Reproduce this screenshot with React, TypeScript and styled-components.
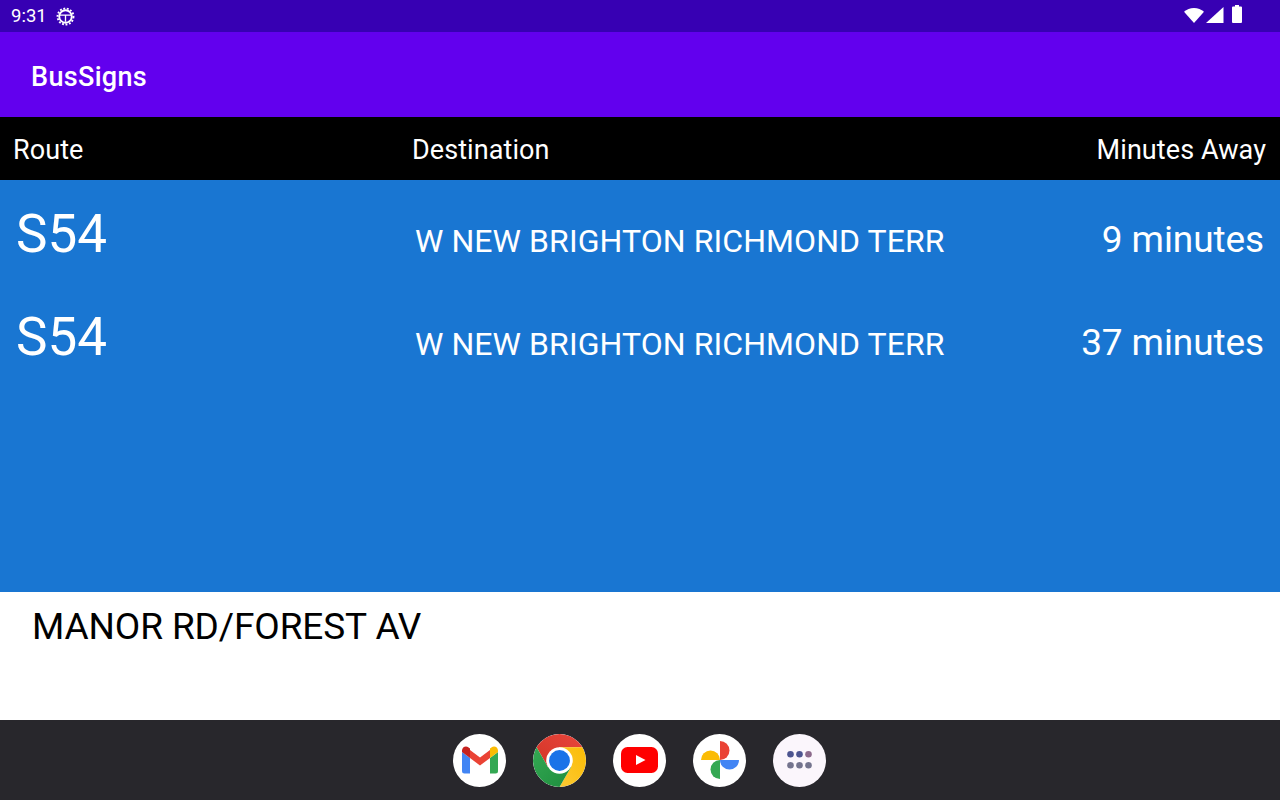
import React from 'react';
import styled, { createGlobalStyle } from 'styled-components';

const GlobalStyle = createGlobalStyle`
  html, body {
    margin: 0;
    padding: 0;
    background: #fff;
    font-family: Roboto, "Noto Sans", sans-serif;
  }
`;

const Screen = styled.div`
  width: 1280px;
  height: 800px;
  display: flex;
  flex-direction: column;
  overflow: hidden;
`;

const StatusBar = styled.div`
  height: 32px;
  flex: none;
  background: #3700b3;
  color: #fff;
  display: flex;
  align-items: center;
  justify-content: space-between;
  padding: 0 38px 0 11px;
  font-size: 18.5px;
`;

const ClockGroup = styled.div`
  display: flex;
  align-items: center;
  gap: 9px;
`;

const SystemIcons = styled.div`
  display: flex;
  align-items: flex-end;
  padding-bottom: 4px;

  svg:last-child {
    margin-left: 8px;
  }
  svg:first-child {
    margin-right: 2px;
  }
`;

const AppBar = styled.div`
  height: 85px;
  flex: none;
  background: #6200ee;
  color: #fff;
  display: flex;
  align-items: center;
  padding: 4px 0 0 31px;
  box-sizing: border-box;
  font-size: 27px;
  letter-spacing: 0.33px;
  font-weight: 500;
`;

const HeaderRow = styled.div`
  height: 63px;
  flex: none;
  background: #000;
  color: #fff;
  display: grid;
  grid-template-columns: 399px 1fr auto;
  padding: 0 14px 0 13px;
  font-size: 27px;
  letter-spacing: 0.08px;
  line-height: 67px;
`;

const Board = styled.div`
  height: 412px;
  flex: none;
  background: #1976d2;
  color: #fff;
  padding-top: 1px;
  box-sizing: border-box;
`;

const BusRow = styled.div`
  height: 103px;
  display: grid;
  grid-template-columns: 399px 1fr auto;
  padding: 0 16px;
`;

const RouteName = styled.div`
  font-size: 53px;
  line-height: 106px;
`;

const Destination = styled.div`
  font-size: 32px;
  letter-spacing: 0.07px;
  line-height: 121px;
`;

const Minutes = styled.div`
  font-size: 37px;
  letter-spacing: -0.1px;
  line-height: 118px;
`;

const StopPanel = styled.div`
  height: 128px;
  flex: none;
  box-sizing: border-box;
  background: #fff;
  color: #000;
  padding-left: 32px;
  font-size: 37px;
  letter-spacing: -0.11px;
  line-height: 69px;
`;

const Dock = styled.div`
  height: 80px;
  flex: none;
  background: #28272c;
  display: flex;
  align-items: center;
  justify-content: center;
  gap: 27px;
  padding-right: 1px;
`;

const DockIcon = styled.div<{ $bg?: string }>`
  width: 53px;
  height: 53px;
  border-radius: 50%;
  background: ${({ $bg }) => $bg || '#fff'};
  display: flex;
  align-items: center;
  justify-content: center;
  overflow: hidden;
`;

const GearIcon = () => (
  <svg width="19" height="19" viewBox="0 0 20 20">
    <circle cx="10" cy="10" r="6.6" fill="none" stroke="#fff" strokeWidth="2" />
    <circle cx="10" cy="10" r="8.4" fill="none" stroke="#fff" strokeWidth="2" strokeDasharray="2 1.7" />
    <path d="M4 8.6h12M10 8.6v7" fill="none" stroke="#fff" strokeWidth="1.4" />
  </svg>
);

const WifiIcon = () => (
  <svg width="20" height="15" viewBox="0 0 20 15">
    <path d="M0 3.800C2.700 1.400 6.100 0 10 0s7.300 1.400 10 3.800L10 15z" fill="#fff" />
  </svg>
);

const SignalIcon = () => (
  <svg width="18" height="16" viewBox="0 0 18 16">
    <path d="M17.500 0v16H0z" fill="#fff" />
  </svg>
);

const BatteryIcon = () => (
  <svg width="10" height="18" viewBox="0 0 10 18">
    <path d="M3 0h4v1.600h2a1 1 0 0 1 1 1V17a1 1 0 0 1-1 1H1a1 1 0 0 1-1-1V2.600a1 1 0 0 1 1-1h2z" fill="#fff" />
  </svg>
);

const GmailIcon = () => (
  <svg width="36" height="28" viewBox="0 0 36 28">
    <path d="M0 6v19a2.500 2.500 0 0 0 2.500 2.500H8V12z" fill="#4285f4" />
    <path d="M28 12v15.500h5.500A2.500 2.500 0 0 0 36 25V6z" fill="#34a853" />
    <path d="M8 12v-8L18 11.500 28 4v8L18 19.500z" fill="#ea4335" />
    <path d="M0 6V4.500C0 .9 4 -.8 6.600 1.400L8 2.500V12z" fill="#c5221f" />
    <path d="M28 2.500l1.400-1.100C32-.8 36 .9 36 4.500V6l-8 6z" fill="#fbbc04" />
  </svg>
);

const ChromeIcon = () => (
  <svg width="53" height="53" viewBox="0 0 52 52">
    <defs>
      <linearGradient id="chromeRed" x1="0" y1="1" x2="1" y2="0">
        <stop offset="0" stopColor="#d33526" />
        <stop offset="1" stopColor="#e8453c" />
      </linearGradient>
      <linearGradient id="chromeGreen" x1="1" y1="1" x2="0" y2="0">
        <stop offset="0" stopColor="#1e8e3e" />
        <stop offset="1" stopColor="#34a853" />
      </linearGradient>
      <linearGradient id="chromeYellow" x1="0" y1="1" x2="1" y2="0">
        <stop offset="0" stopColor="#fcc934" />
        <stop offset="1" stopColor="#fbbc04" />
      </linearGradient>
    </defs>
    <path d="M3.500 13A26 26 0 0 1 48.500 13H26L14.750 32.500z" fill="url(#chromeRed)" />
    <path d="M48.500 13A26 26 0 0 1 26 52L37.250 32.500 26 13z" fill="url(#chromeYellow)" />
    <path d="M26 52A26 26 0 0 1 3.500 13L14.750 32.500 26 26 37.250 32.500z" fill="url(#chromeGreen)" />
    <circle cx="26" cy="26" r="13" fill="#fff" />
    <circle cx="26" cy="26" r="10.200" fill="#1a73e8" />
  </svg>
);

const YoutubeIcon = () => (
  <svg width="37" height="26" viewBox="0 0 37 26">
    <rect width="37" height="26" rx="6.500" fill="#f00" />
    <path d="M15 8l9.500 5-9.500 5z" fill="#fff" />
  </svg>
);

const PhotosIcon = () => (
  <svg width="38" height="38" viewBox="0 0 38 38">
    <path d="M19 19V0a9.500 9.500 0 0 1 0 19z" fill="#ea4335" />
    <path d="M19 19h19a9.500 9.500 0 0 1-19 0z" fill="#4285f4" />
    <path d="M19 19v19a9.500 9.500 0 0 1 0-19z" fill="#34a853" />
    <path d="M19 19H0a9.500 9.500 0 0 1 19 0z" fill="#fbbc04" />
  </svg>
);

const AppsIcon = () => (
  <svg width="25" height="18" viewBox="0 0 25 18">
    <circle cx="3.500" cy="3.300" r="3.300" fill="#4d5590" />
    <circle cx="12.500" cy="3.300" r="3.300" fill="#4d5590" />
    <circle cx="21.500" cy="3.300" r="3.300" fill="#8c6a8c" />
    <circle cx="3.500" cy="14.300" r="3.300" fill="#74748e" />
    <circle cx="12.500" cy="14.300" r="3.300" fill="#74748e" />
    <circle cx="21.500" cy="14.300" r="3.300" fill="#74748e" />
  </svg>
);

const arrivals = [
  { route: 'S54', destination: 'W NEW BRIGHTON RICHMOND TERR', minutes: '9 minutes' },
  { route: 'S54', destination: 'W NEW BRIGHTON RICHMOND TERR', minutes: '37 minutes' },
];

export default function App() {
  return (
    <Screen>
      <GlobalStyle />
      <StatusBar>
        <ClockGroup>
          <span>9:31</span>
          <GearIcon />
        </ClockGroup>
        <SystemIcons>
          <WifiIcon />
          <SignalIcon />
          <BatteryIcon />
        </SystemIcons>
      </StatusBar>
      <AppBar>BusSigns</AppBar>
      <HeaderRow>
        <span>Route</span>
        <span>Destination</span>
        <span>Minutes Away</span>
      </HeaderRow>
      <Board>
        {arrivals.map((a) => (
          <BusRow key={a.minutes}>
            <RouteName>{a.route}</RouteName>
            <Destination>{a.destination}</Destination>
            <Minutes>{a.minutes}</Minutes>
          </BusRow>
        ))}
      </Board>
      <StopPanel>MANOR RD/FOREST AV</StopPanel>
      <Dock>
        <DockIcon><GmailIcon /></DockIcon>
        <DockIcon><ChromeIcon /></DockIcon>
        <DockIcon><YoutubeIcon /></DockIcon>
        <DockIcon><PhotosIcon /></DockIcon>
        <DockIcon $bg="#fbf6fc"><AppsIcon /></DockIcon>
      </Dock>
    </Screen>
  );
}
